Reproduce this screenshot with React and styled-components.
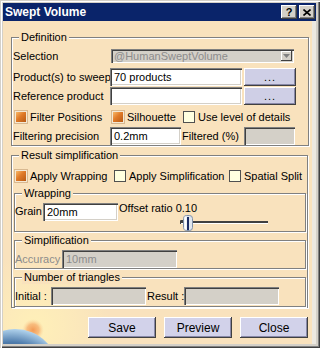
import React from 'react';
import styled, { createGlobalStyle } from 'styled-components';

const BEIGE = '#f9e2bd';

const GlobalStyle = createGlobalStyle`
  html, body { margin: 0; padding: 0; }
  body {
    font-family: "Liberation Sans", Arial, sans-serif;
    font-size: 11px;
    color: #000;
    background: #d4d0c8;
  }
`;

const Window = styled.div`
  width: 320px;
  height: 348px;
  box-sizing: border-box;
  padding: 3px 4px 4px 3px;
  display: flex;
  flex-direction: column;
  background: #d4d0c8;
  box-shadow: inset 1px 1px #d4d0c8, inset 2px 2px #fff,
    inset -1px -1px #404040, inset -2px -2px #808080;
`;

const TitleBar = styled.div`
  height: 18px;
  flex: none;
  display: flex;
  align-items: center;
  padding: 0 1px 0 2px;
  background: #0a246a;
`;

const Title = styled.span`
  flex: 1;
  color: #fff;
  font-size: 12px;
  font-weight: bold;
`;

const TitleButton = styled.button`
  width: 16px;
  height: 14px;
  margin-left: 2px;
  padding: 0;
  border: 0;
  display: flex;
  align-items: center;
  justify-content: center;
  font: bold 11px "Liberation Sans", Arial, sans-serif;
  color: #000;
  background: #d4d0c8;
  box-shadow: inset -1px -1px #404040, inset 1px 1px #fff, inset -2px -2px #808080;
`;

const Content = styled.div`
  flex: 1;
  position: relative;
  padding: 0 3px 0 8px;
  border-right: 4px solid #ece8e0;
  background: radial-gradient(circle at 32px 306px, #fff0b8 0, rgba(255, 236, 170, 0) 75px), ${BEIGE};
`;

const Decoration = styled.svg`
  position: absolute;
  left: 0;
  bottom: 0;
  z-index: 0;
`;

const Body = styled.div`
  position: relative;
  z-index: 1;
`;

const Group = styled.fieldset`
  margin: ${p => p.$mt}px ${p => p.$mr || 0}px 0 ${p => p.$ml || 0}px;
  padding: ${p => p.$pt}px 0 ${p => p.$pb || 0}px ${p => p.$pl}px;
  border: 1px solid #808080;
  box-shadow: inset 1px 1px #fff, 1px 1px #fff;
  min-width: 0;
`;

const Legend = styled.legend`
  margin-left: ${p => p.$off}px;
  padding: 0 2px;
  line-height: 13px;
  background: ${BEIGE};
`;

const Row = styled.div`
  display: flex;
  align-items: ${p => p.$align || 'center'};
  height: ${p => p.$h}px;
  margin-top: ${p => p.$mt || 0}px;
  margin-left: ${p => p.$ml || 0}px;
`;

const Label = styled.span`
  flex: none;
  width: ${p => p.$w}px;
  padding-left: ${p => p.$pl || 0}px;
  box-sizing: border-box;
  white-space: nowrap;
  color: ${p => (p.$disabled ? '#8c8c8c' : '#000')};
`;

const Field = styled.div`
  flex: none;
  width: ${p => p.$w}px;
  height: ${p => p.$h || 18}px;
  margin-left: ${p => p.$ml || 0}px;
  margin-top: ${p => p.$mt || 0}px;
  box-sizing: border-box;
  padding-left: 4px;
  display: flex;
  align-items: center;
  white-space: nowrap;
  color: ${p => (p.$disabled ? '#8c8c8c' : '#000')};
  background: ${p => (p.$disabled ? '#d4d0c8' : '#fff')};
  box-shadow: inset 1px 1px #808080, inset 2px 2px #404040,
    inset -1px -1px #fff, inset -2px -2px #d4d0c8;
`;

const Combo = styled(Field)`
  position: relative;
  padding-left: 3px;
`;

const ComboArrow = styled.span`
  position: absolute;
  right: 2px;
  top: 2px;
  bottom: 2px;
  width: 11px;
  display: flex;
  align-items: center;
  justify-content: center;
  background: #d4d0c8;
  box-shadow: inset -1px -1px #404040, inset 1px 1px #fff;
`;

const DotsButton = styled.button`
  flex: none;
  width: 52px;
  height: 18px;
  margin-left: 2px;
  padding: 0 0 1px;
  border: 0;
  font: 11px "Liberation Sans", Arial, sans-serif;
  letter-spacing: 1px;
  color: #000;
  background: #cfcfe6;
  box-shadow: inset -1px -1px #404040, inset 1px 1px #fff, inset -2px -2px #8888a8;
`;

const Option = styled.label`
  flex: none;
  width: ${p => (p.$w ? `${p.$w}px` : 'auto')};
  display: flex;
  align-items: center;
  gap: 3px;
  white-space: nowrap;
`;

const Box = styled.span`
  flex: none;
  width: 12px;
  height: 12px;
  box-sizing: border-box;
  border: 1px solid ${p => (p.$on ? '#f4e8d4' : '#505050')};
  background: ${p =>
    p.$on
      ? 'linear-gradient(135deg, #f8b868 0%, #e07a28 45%, #b85a14 100%)'
      : '#ffffe0'};
  box-shadow: ${p => (p.$on ? '0 0 0 1px #d8b890' : 'none')};
`;

const OffsetColumn = styled.div`
  display: flex;
  flex-direction: column;
  margin-left: 1px;
`;

const OffsetText = styled.span`
  line-height: 13px;
  white-space: nowrap;
`;

const Actions = styled.div`
  display: flex;
  justify-content: flex-end;
  gap: 8px;
  margin: 9px 1px 0 0;
`;

const ActionButton = styled.button`
  width: 68px;
  height: 21px;
  padding: 0;
  border: 0;
  font: 12px "Liberation Sans", Arial, sans-serif;
  color: #000;
  background: #d2d2ea;
  box-shadow: inset -1px -1px #404040, inset 1px 1px #fff, inset -2px -2px #8888a8;
`;

const Checkbox = ({ on, w, children }) => (
  <Option $w={w}>
    <Box $on={on} />
    <span>{children}</span>
  </Option>
);

const Slider = () => (
  <svg width="90" height="16" viewBox="0 0 90 16" style={{ marginLeft: 61 }}>
    <path d="M0.5 9 V5.5 H3" stroke="#404040" fill="none" />
    <rect x="1" y="6" width="87" height="2" fill="#404040" />
    <rect x="1" y="8" width="87" height="1" fill="#fff" />
    <rect x="3.5" y="0.5" width="9" height="15" rx="3" fill="#dfe6ee" stroke="#8090a8" />
    <rect x="4.5" y="1.5" width="2" height="13" fill="#fff" />
    <rect x="7" y="2" width="2" height="13" fill="#1c2c64" />
  </svg>
);

const App = () => (
  <>
    <GlobalStyle />
    <Window>
      <TitleBar>
        <Title>Swept Volume</Title>
        <TitleButton>?</TitleButton>
        <TitleButton>
          <svg width="8" height="7" viewBox="0 0 8 7">
            <path d="M0.5 0.5 L7.5 6.5 M7.5 0.5 L0.5 6.5" stroke="#000" strokeWidth="1.6" />
          </svg>
        </TitleButton>
      </TitleBar>
      <Content>
        <Decoration width="60" height="40" viewBox="0 0 60 40">
          <defs>
            <radialGradient id="sun" cx="0.5" cy="0.5" r="0.5">
              <stop offset="0" stopColor="#f39a55" />
              <stop offset="0.55" stopColor="#f6b070" stopOpacity="0.8" />
              <stop offset="1" stopColor="#fbd8a0" stopOpacity="0" />
            </radialGradient>
            <radialGradient id="planet" cx="0.45" cy="0.75" r="0.75">
              <stop offset="0" stopColor="#1c2230" />
              <stop offset="0.55" stopColor="#2e3e56" />
              <stop offset="0.8" stopColor="#4f7cac" />
              <stop offset="1" stopColor="#b0d2ec" />
            </radialGradient>
          </defs>
          <circle cx="30" cy="26" r="11" fill="url(#sun)" />
          <circle cx="12" cy="69" r="44" fill="url(#planet)" />
        </Decoration>
        <Body>
          <Group $mt={10} $pt={4} $pl={1}>
            <Legend $off={6}>Definition</Legend>
            <Row $h={15} $mt={0}>
              <Label $w={97}>Selection</Label>
              <Combo $w={183} $h={14} $ml={1} $mt={1} $disabled>
                @HumanSweptVolume
                <ComboArrow>
                  <svg width="7" height="4" viewBox="0 0 7 4">
                    <path d="M0 0 H7 L3.5 4 Z" fill="#808080" />
                  </svg>
                </ComboArrow>
              </Combo>
            </Row>
            <Row $h={18} $mt={5}>
              <Label $w={97}>Product(s) to sweep</Label>
              <Field $w={132}>70 products</Field>
              <DotsButton>...</DotsButton>
            </Row>
            <Row $h={18} $mt={1}>
              <Label $w={97}>Reference product</Label>
              <Field $w={132} />
              <DotsButton>...</DotsButton>
            </Row>
            <Row $h={20} $mt={2} $ml={2}>
              <Checkbox on w={97}>Filter Positions</Checkbox>
              <Checkbox on w={71}>Silhouette</Checkbox>
              <Checkbox>Use level of details</Checkbox>
            </Row>
            <Row $h={18}>
              <Label $w={97}>Filtering precision</Label>
              <Field $w={71}>0.2mm</Field>
              <Label $w={63} $pl={1}>Filtered (%)</Label>
              <Field $w={51} $disabled />
            </Row>
          </Group>

          <Group $mt={3} $pt={4} $pl={2} $mr={1}>
            <Legend $off={5}>Result simplification</Legend>
            <Row $h={20} $ml={1}>
              <Checkbox on w={99}>Apply Wrapping</Checkbox>
              <Checkbox w={115}>Apply Simplification</Checkbox>
              <Checkbox>Spatial Split</Checkbox>
            </Row>

            <Group $mt={1} $pt={2} $pl={0} $mr={1}>
              <Legend $off={7}>Wrapping</Legend>
              <Row $h={29} $align="flex-start">
                <Label $w={28} style={{ marginTop: 3 }}>Grain</Label>
                <Field $w={75} $mt={1}>20mm</Field>
                <OffsetColumn>
                  <OffsetText>Offset ratio 0.10</OffsetText>
                  <Slider />
                </OffsetColumn>
              </Row>
            </Group>

            <Group $mt={2} $pt={3} $pl={0} $mr={1}>
              <Legend $off={7}>Simplification</Legend>
              <Row $h={18}>
                <Label $w={47} $disabled>Accuracy</Label>
                <Field $w={115} $disabled>10mm</Field>
              </Row>
            </Group>

            <Group $mt={2} $pt={3} $pb={1} $pl={0} $mr={1}>
              <Legend $off={7}>Number of triangles</Legend>
              <Row $h={18}>
                <Label $w={36}>Initial :</Label>
                <Field $w={95} $disabled />
                <Label $w={38} $pl={1}>Result :</Label>
                <Field $w={95} $disabled />
              </Row>
            </Group>
          </Group>

          <Actions>
            <ActionButton>Save</ActionButton>
            <ActionButton>Preview</ActionButton>
            <ActionButton>Close</ActionButton>
          </Actions>
        </Body>
      </Content>
    </Window>
  </>
);

export default App;
